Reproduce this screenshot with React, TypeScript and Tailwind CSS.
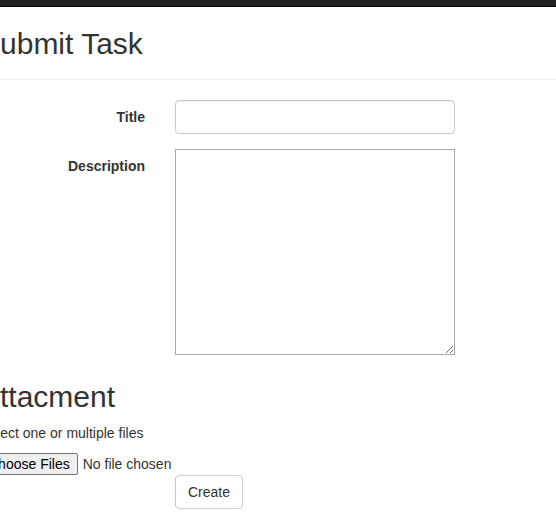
export default function App() {
  return (
    <div className="min-h-screen bg-white font-['Liberation_Sans',Arial,sans-serif] text-[14px] leading-[20px] text-[#333]">
      <div className="h-[7px] border-b border-[#080808] bg-[#222]" />

      <div className="-ml-[20px]">
        <div className="mt-[20px] border-b border-[#eee] pb-[19px]">
          <h2 className="text-[30px] leading-[33px] font-normal">Submit Task</h2>
        </div>

        <form className="mt-[20px]" onSubmit={(e) => e.preventDefault()}>
          <div className="mb-[15px] flex">
            <label htmlFor="title" className="w-[180px] pr-[15px] pt-[7px] text-right font-bold">
              Title
            </label>
            <div className="pl-[15px]">
              <input
                id="title"
                type="text"
                className="h-[34px] w-[280px] rounded-[4px] border border-[#ccc] bg-white px-[12px] shadow-[inset_0_1px_1px_rgba(0,0,0,0.075)] outline-none"
              />
            </div>
          </div>

          <div className="flex">
            <label htmlFor="description" className="w-[180px] pr-[15px] pt-[7px] text-right font-bold">
              Description
            </label>
            <div className="pl-[15px]">
              <textarea
                id="description"
                className="block h-[206px] w-[280px] resize border border-[#a9a9a9] bg-white p-[2px] outline-none"
              />
            </div>
          </div>

          <h2 className="mt-[25px] text-[30px] leading-[33px] font-normal">Attacment</h2>
          <p className="mt-[10px]">Select one or multiple files</p>

          <input
            type="file"
            multiple
            className="mt-[10px] block text-[14px] leading-[20px] file:mr-[5px] file:rounded-[2px] file:border file:border-[#767676] file:bg-[#efefef] file:px-[7px] file:py-0 file:text-[#000]"
          />

          <div className="pl-[195px]">
            <button
              type="submit"
              className="h-[34px] rounded-[4px] border border-[#ccc] bg-white px-[12px] text-[14px] text-[#333]"
            >
              Create
            </button>
          </div>
        </form>
      </div>
    </div>
  );
}
